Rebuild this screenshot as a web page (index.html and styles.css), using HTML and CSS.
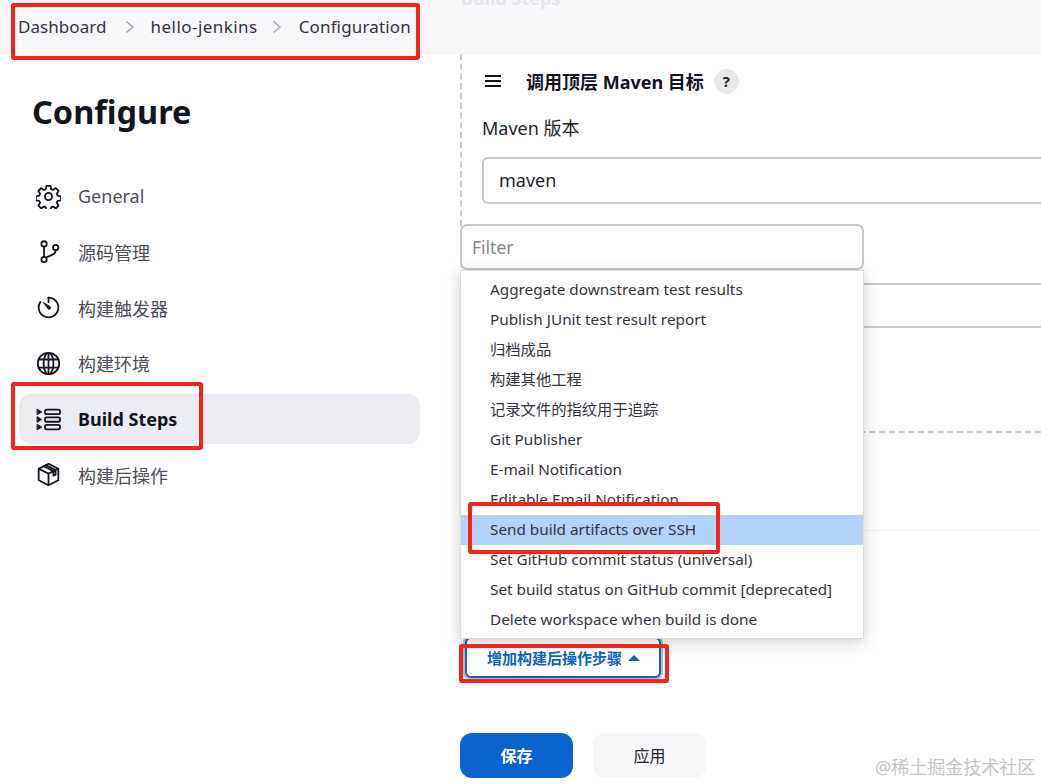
FILE: index.html
```html
<!DOCTYPE html>
<html lang="zh">
<head>
<meta charset="utf-8">
<title>Configure</title>
<link rel="stylesheet" href="styles.css">
</head>
<body>
<div class="page">
  <header class="topbar">
    <nav class="crumbs">
      <span class="c1">Dashboard</span>
      <svg class="chev" viewBox="0 0 10 14"><path d="M1.500 1.500 8 7l-6.500 5.500"/></svg>
      <span class="c2">hello-jenkins</span>
      <svg class="chev" viewBox="0 0 10 14"><path d="M1.500 1.500 8 7l-6.500 5.500"/></svg>
      <span class="c3">Configuration</span>
    </nav>
    <div class="ghost-title">Build Steps</div>
  </header>
  <div class="body">
    <aside class="side">
      <h1 class="title">Configure</h1>
      <ul class="nav">
        <li class="nav-item">
          <svg class="ico" viewBox="0 0 28 28"><circle cx="14" cy="14" r="4"/><path d="M11.800 2h4.400l.8 3.700 2 .9 3.200-2 3.100 3.100-2 3.200.9 2.100 3.800.8v4.400l-3.800.8-.9 2 2 3.200-3.100 3.100-3.200-2-2 .9-.8 3.800h-4.400l-.8-3.800-2.100-.9-3.200 2-3.100-3.100 2-3.200-.9-2-3.800-.8v-4.400l3.800-.8.9-2.100-2-3.200 3.100-3.100 3.200 2 2.100-.9z"/></svg>
          <span>General</span>
        </li>
        <li class="nav-item">
          <svg class="ico" viewBox="0 0 28 28"><circle cx="9" cy="5.500" r="3"/><circle cx="9" cy="23" r="3"/><circle cx="22" cy="9.500" r="3"/><path d="M9 8.500V20M11.500 20.500l6-2.500c3-1.200 4.500-3 4.500-5.500"/></svg>
          <span>源码管理</span>
        </li>
        <li class="nav-item">
          <svg class="ico" viewBox="0 0 28 28"><path d="M14 3a11 11 0 1 1-9 4.700"/><path d="M14 3v5"/><path class="solid" d="M8.500 8.500l7 4.300a1.700 1.700 0 1 1-2.300 2.300z"/></svg>
          <span>构建触发器</span>
        </li>
        <li class="nav-item">
          <svg class="ico" viewBox="0 0 28 28"><circle cx="14" cy="14" r="12"/><ellipse cx="14" cy="14" rx="5.500" ry="12"/><path d="M14 2v24M3 9.500h22M3 18.500h22"/></svg>
          <span>构建环境</span>
        </li>
        <li class="nav-item active">
          <svg class="ico" viewBox="0 0 28 28"><rect x="10" y="3" width="17" height="5" rx="2.200"/><rect x="10" y="11.500" width="17" height="5" rx="2.200"/><rect x="10" y="20" width="17" height="5" rx="2.200"/><path class="solid" d="M1.500 2.500l5 3-5 3zM1.500 11l5 3-5 3zM1.500 19.500l5 3-5 3z"/></svg>
          <span>Build Steps</span>
        </li>
        <li class="nav-item">
          <svg class="ico" viewBox="0 0 28 28"><path d="M14 2 25 7.500v13L14 26 3 20.500v-13z"/><path d="M3 7.500 14 13l11-5.500M14 13v13M8.500 4.800 19.500 10.300v5l2.500-1.200v-5L11 3.500"/></svg>
          <span>构建后操作</span>
        </li>
      </ul>
    </aside>
    <main class="main">
      <section class="step">
        <div class="step-head">
          <svg class="handle" viewBox="0 0 18 14"><path d="M1 2h16M1 7h16M1 12h16"/></svg>
          <strong>调用顶层 Maven 目标</strong>
          <span class="help">?</span>
        </div>
        <label class="field-label">Maven 版本</label>
        <div class="input">maven</div>
      </section>
      <div class="line-a"></div>
      <div class="line-b"></div>
      <div class="dash"></div>
      <div class="line-c"></div>
      <div class="post">
        <button class="add-btn">增加构建后操作步骤<i class="caret"></i></button>
      </div>
      <div class="actions">
        <button class="save">保存</button>
        <button class="apply">应用</button>
      </div>

      <div class="dropdown">
        <div class="filter">Filter</div>
        <ul class="menu">
          <li>Aggregate downstream test results</li>
          <li>Publish JUnit test result report</li>
          <li>归档成品</li>
          <li>构建其他工程</li>
          <li>记录文件的指纹用于追踪</li>
          <li>Git Publisher</li>
          <li>E-mail Notification</li>
          <li>Editable Email Notification</li>
          <li class="hot">Send build artifacts over SSH</li>
          <li>Set GitHub commit status (universal)</li>
          <li>Set build status on GitHub commit [deprecated]</li>
          <li>Delete workspace when build is done</li>
        </ul>
      </div>
    </main>
  </div>
  <div class="mark m1"></div>
  <div class="mark m2"></div>
  <div class="mark m3"></div>
  <div class="mark m4"></div>
  <div class="watermark">@稀土掘金技术社区</div>
</div>
</body>
</html>
```
FILE: styles.css
```css
* { box-sizing: border-box; }
html, body { margin: 0; padding: 0; background: #fff; }
body {
  font-family: "Noto Sans", "Noto Sans CJK SC", sans-serif;
  color: #14141f;
}
.page { position: relative; width: 1041px; height: 784px; overflow: hidden; }

.topbar {
  position: relative;
  height: 54px;
  background: #f7f7f9;
  padding: 14px 0 0 18px;
}
.crumbs { display: flex; align-items: center; font-size: 17px; line-height: 26px; color: #33333d; }
.c1 { letter-spacing: .06px; }
.c2 { letter-spacing: .45px; }
.c3 { letter-spacing: .15px; }
.chev { width: 10px; height: 14px; margin: 0 16px 0 18px; fill: none; stroke: #a3a3ab; stroke-width: 1.500; }
.c2 + .chev { margin-left: 14px; margin-right: 17px; }
.ghost-title {
  position: absolute; left: 461px; top: -14px;
  font-size: 18px; line-height: 24px; font-weight: 700; color: #e6e6ea;
}

.body { display: flex; height: 730px; }
.side { width: 440px; flex: none; padding: 0 20px 0 19px; }
.title { margin: 35px 0 36px 13px; font-size: 32.500px; line-height: 46px; font-weight: 700; color: #14141f; }
.nav { list-style: none; margin: 0; padding: 0; display: flex; flex-direction: column; gap: 5.800px; }
.nav-item {
  display: flex; align-items: center; gap: 17px;
  height: 50px; padding-left: 17px; border-radius: 12px;
  font-size: 18px; color: #4d4d56;
}
.nav-item.active { background: #ebebf2; font-weight: 700; color: #14141f; }
.ico { width: 25px; height: 25px; flex: none; fill: none; stroke: #14141f; stroke-width: 2; stroke-linejoin: round; stroke-linecap: round; }
.ico .solid { fill: #14141f; stroke-width: 1; }

.main { position: relative; flex: 1; min-width: 0; }
.step { margin-left: 20px; height: 172px; border-left: 2px dashed #c8cacb; padding: 0 0 0 20px; }
.step-head { display: flex; align-items: center; height: 54px; font-size: 18px; color: #14141f; }
.step-head strong { font-weight: 700; margin-left: 24px; }
.handle { width: 18px; height: 14px; margin-left: 2px; fill: none; stroke: #14141f; stroke-width: 1.800; }
.help {
  width: 25px; height: 25px; border-radius: 50%; margin-left: 10px; background: #e9e9ea;
  display: flex; align-items: center; justify-content: center; font-size: 15px; font-weight: 700; color: #22222a;
}
.field-label { display: block; margin-top: 7px; font-size: 18px; line-height: 26px; color: #22222a; }
.input {
  margin-top: 16px; height: 47px; width: 600px;
  border: 2px solid #c6c8c8; border-right: 0; border-radius: 6px 0 0 6px;
  padding-left: 15px; font-size: 18px; line-height: 43px; color: #22222a;
}
.line-a, .line-b { position: absolute; left: 400px; right: 0; height: 2px; background: #c6c8c8; }
.line-a { top: 229px; }
.line-b { top: 272px; }
.dash { position: absolute; left: 400px; right: 0; top: 377px; border-top: 2px dashed #c8cacb; }
.line-c { position: absolute; left: 400px; right: 0; top: 476px; height: 1px; background: #f1f1f3; }

.post { position: absolute; left: 25px; top: 583px; }
.add-btn {
  display: flex; align-items: center; height: 41px; width: 196px; padding: 0 0 0 20px;
  border: 2px solid #0b63c5; border-radius: 6px; background: #fff;
  box-shadow: 0 0 0 2px #a9bdd6;
  font: 700 15px "Noto Sans", "Noto Sans CJK SC", sans-serif; color: #0b63c5;
}
.caret { display: block; margin-left: 6px; border: 6px solid transparent; border-top: 0; border-bottom: 6px solid #0b63c5; }

.actions { position: absolute; left: 20px; top: 679px; display: flex; gap: 20px; }
.save, .apply { width: 113px; height: 45px; border: 0; border-radius: 12px; padding: 0 0 2px; font: 16px "Noto Sans", "Noto Sans CJK SC", sans-serif; }
.save { background: #0b63ce; color: #fff; font-weight: 700; }
.apply { background: #f7f7f9; color: #22222a; }

.dropdown { position: absolute; left: 20px; top: 170px; width: 404px; }
.filter {
  height: 46px; border: 2px solid #c6c8c8; border-radius: 7px; background: #fff;
  padding-left: 10px; font-size: 17.500px; line-height: 42px; color: #85858c;
}
.menu {
  list-style: none; margin: 0; padding: 4px 0 0; height: 369px; background: #fff;
  border: 1px solid #dcdcdc; overflow: hidden; box-shadow: 0 3px 14px rgba(0, 0, 0, .2);
}
.menu li { height: 30px; padding-left: 29px; font-size: 15.300px; line-height: 28px; color: #33333c; white-space: nowrap; }
.menu li.hot { background: #b2d4fb; }

.mark { position: absolute; border: 4px solid #f7231b; border-radius: 3px; }
.m1 { left: 11px; top: 3px; width: 409px; height: 57px; }
.m2 { left: 11px; top: 382px; width: 192px; height: 68px; }
.m3 { left: 468px; top: 502px; width: 252px; height: 52px; }
.m4 { left: 459px; top: 644px; width: 210px; height: 39px; }

.watermark {
  position: absolute; left: 875px; top: 755px;
  font-size: 18px; line-height: 24px; color: #c4c4c8; white-space: nowrap;
}
```
